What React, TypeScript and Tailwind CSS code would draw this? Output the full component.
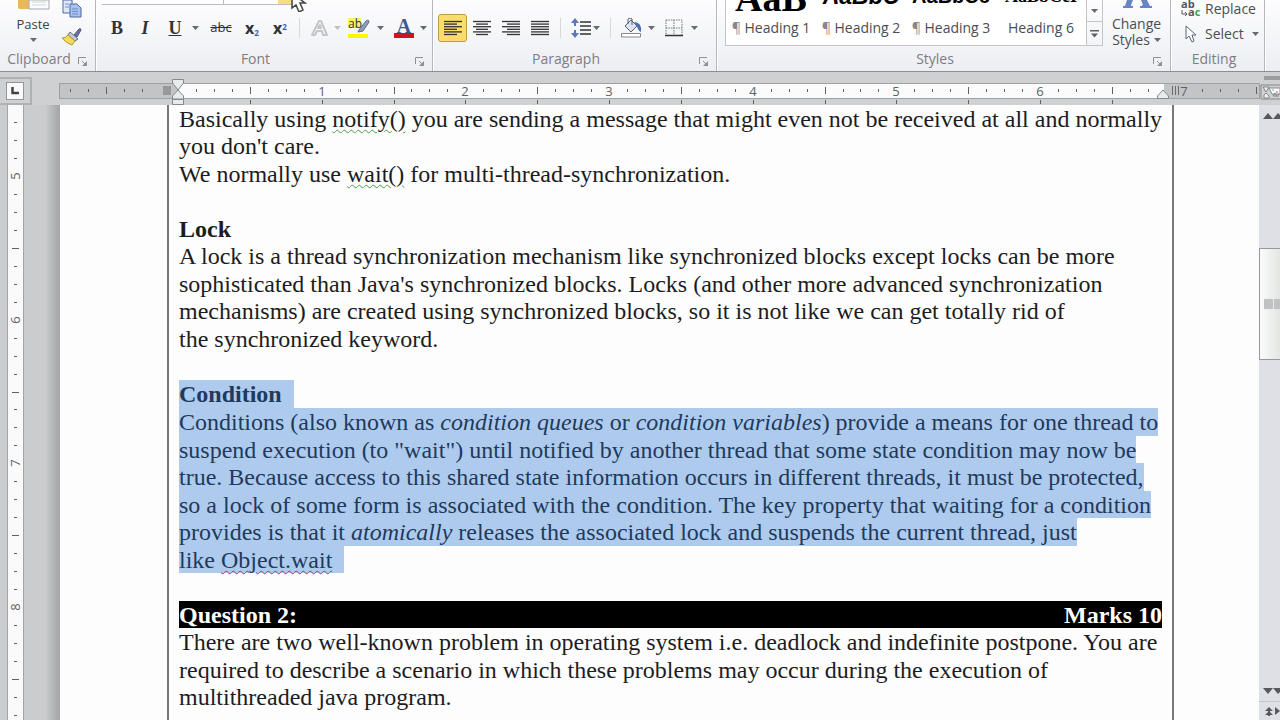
import React from "react";

// distance between eighth-inch marks on both rulers
const EIGHTH = 17.96;

const icon = "flex items-center justify-center shrink-0";

function Caret({ className = "text-[#666a70]" }: { className?: string }) {
  return (
    <svg width="7" height="4" viewBox="0 0 7 4" className={className}>
      <path d="M0 0H7L3.5 4Z" fill="currentColor" />
    </svg>
  );
}

function Launcher() {
  return (
    <button aria-label="More options" className={icon}>
      <svg width="10" height="10" viewBox="0 0 10 10" fill="none" stroke="#8d9096">
        <path d="M.5 7V.5H8M4 4L7 7" />
        <path d="M9 4V9H4Z" fill="#8d9096" stroke="none" />
      </svg>
    </button>
  );
}

function Group({
  title,
  className,
  launcher = true,
  children,
}: {
  title: string;
  className: string;
  launcher?: boolean;
  children: React.ReactNode;
}) {
  return (
    <section
      className={`flex flex-col justify-end shrink-0 border-r border-[#b4b7bc] shadow-[1px_0_0_#ffffff] ${className}`}
    >
      <div className="flex flex-col justify-end shrink-0 h-[50px]">{children}</div>
      <div className="flex items-end shrink-0 h-[21px] pr-[7px] pb-1 text-sm leading-4 text-[#7b7e84]">
        <h2 className="grow text-center">{title}</h2>
        {launcher && <Launcher />}
      </div>
    </section>
  );
}

function Lines({ rows }: { rows: number[][] }) {
  return (
    <svg width="18" height="16" viewBox="0 0 18 16" stroke="#333" strokeWidth="1.3">
      {rows.map(([x1, x2], i) => (
        <path key={i} d={`M${x1} ${1.5 + i * 2.6}H${x2}`} />
      ))}
    </svg>
  );
}

const ALIGN = [
  { name: "Align left", rows: [[0, 18], [0, 13], [0, 18], [0, 13], [0, 18], [0, 13]] },
  { name: "Center", rows: [[0, 18], [3, 15], [0, 18], [3, 15], [0, 18], [3, 15]] },
  { name: "Align right", rows: [[0, 18], [5, 18], [0, 18], [5, 18], [0, 18], [5, 18]] },
  { name: "Justify", rows: [[0, 18], [0, 18], [0, 18], [0, 18], [0, 18], [0, 18]] },
];

function ClipboardGroup() {
  return (
    <Group title="Clipboard" className="w-24">
      <div className="flex items-end h-[50px] pl-4">
        <button className="flex flex-col items-center w-[34px] text-[13px] leading-4 text-[#3f4247]">
          <svg width="34" height="10" viewBox="0 0 34 10">
            <path d="M2 0H18V9H4Q2 9 2 7Z" fill="#ecb75c" />
            <path d="M13 0H33V9H13Z" fill="#fbfcfd" stroke="#a7aab2" />
            <path d="M16 2H30M16 5H30" stroke="#d2d5db" />
          </svg>
          <span className="mt-1.5">Paste</span>
          <span className="flex h-[18px] pt-1.5">
            <Caret />
          </span>
        </button>
        <div className="flex flex-col items-center ml-3 mb-1">
          <button aria-label="Copy" className={icon}>
            <svg width="20" height="18" viewBox="0 0 20 18" stroke="#4a69a8">
              <path d="M1 0H10V13H1Z" fill="#dfe8f8" />
              <path d="M8 4H15L19 8V17H8Z" fill="#a9c2ee" />
              <path d="M10 9H16M10 11.500H16M10 14H16M3 4H7M3 7H7" stroke="#6d90cf" />
            </svg>
          </button>
          <button aria-label="Format painter" className="mt-2.5">
            <svg width="20" height="18" viewBox="0 0 20 18">
              <path d="M12 7L17 1Q19 0 19 2L15 9Z" fill="#6c70a4" stroke="#4d5180" />
              <path d="M8 4L16 11L13 13L6 7Z" fill="#c6c9d8" stroke="#686b80" />
              <path d="M6 7L13 13L10 17Q4 15 0 10Q4 10 6 7Z" fill="#f2dc58" stroke="#b09832" />
            </svg>
          </button>
        </div>
      </div>
    </Group>
  );
}

function FontGroup() {
  return (
    <Group title="Font" className="w-[337px]">
      <div className="flex ml-[6px] h-[5px] w-[190px] border-b border-[#b9bcc2]">
        <div className="w-[122px] border-r border-[#b9bcc2] bg-white" />
        <div className="grow bg-white" />
        <div className="w-[14px] bg-[#f6df7c]" />
      </div>
      <div className="flex items-center h-[45px] pl-3 text-[#303236]">
        <button className="w-[18px] text-center font-['Liberation_Serif',serif] font-bold text-lg">B</button>
        <button className="w-[18px] ml-[10px] text-center font-['Liberation_Serif',serif] italic font-bold text-lg">I</button>
        <button className="w-[18px] ml-3 text-center font-['Liberation_Serif',serif] font-bold text-lg underline">U</button>
        <button aria-label="Underline style" className="ml-2">
          <Caret />
        </button>
        <button className="w-[22px] ml-[11px] text-[13px] text-center line-through">abc</button>
        <button aria-label="Subscript" className="w-[18px] ml-[11px] font-bold text-base">
          x<sub className="text-[8px] text-[#3c62b0]">2</sub>
        </button>
        <button aria-label="Superscript" className="w-[18px] ml-[10px] font-bold text-base">
          x<sup className="text-[8px] text-[#3c62b0]">2</sup>
        </button>
        <span className="w-px h-5 ml-2.5 bg-[#d5d7dc]" />
        <button aria-label="Text effects" className="flex items-center ml-2.5 gap-1">
          <svg width="20" height="18" viewBox="0 0 20 18" fill="none" stroke="#c3c5c9" strokeLinejoin="round">
            <path d="M2 16L9 2H11L17 16H13L12 12H7L5 16ZM8 9H11L10 6Z" strokeWidth="2" />
          </svg>
          <Caret className="text-[#bfc1c5]" />
        </button>
        <button aria-label="Text highlight color" className="flex items-center ml-1.5 gap-1.5">
          <svg width="24" height="22" viewBox="0 0 24 22">
            <path d="M1 1H14V11H1Z" fill="#f4f26c" />
            <text x="1" y="11" fontSize="12" fill="#303236">ab</text>
            <path d="M12 13L19 4Q22 2 22 5L16 14L11 15Z" fill="#8f9ebb" stroke="#5c6984" />
            <path d="M1 17H21V21H1Z" fill="#fbf606" />
          </svg>
          <Caret />
        </button>
        <button aria-label="Font color" className="flex items-center ml-2.5 gap-1.5">
          <span className="flex flex-col items-center w-5">
            <span className="h-[15px] font-['Liberation_Serif',serif] font-bold text-xl leading-4 text-[#3f5790]">A</span>
            <span className="w-5 h-[5px] bg-[#d3101d]" />
          </span>
          <Caret />
        </button>
      </div>
    </Group>
  );
}

function ParagraphGroup() {
  return (
    <Group title="Paragraph" className="w-[284px]">
      <div className="flex items-center h-[45px] pl-[5px]">
        {ALIGN.map(({ name, rows }, i) => (
          <button
            key={name}
            aria-label={name}
            className={`${icon} w-[29px] h-7 rounded-[3px] ${
              i === 0 ? "border border-[#c29a3f] bg-[#fbdc6d]" : ""
            }`}
          >
            <Lines rows={rows} />
          </button>
        ))}
        <span className="w-px h-5 ml-1.5 bg-[#d5d7dc]" />
        <button aria-label="Line spacing" className="flex items-center ml-2.5 gap-0.5">
          <svg width="20" height="20" viewBox="0 0 20 20">
            <path d="M4 0L8 5H5V8H3V5H0ZM4 20L8 15H5V12H3V15H0Z" fill="#5b78bd" />
            <path d="M9 4H20M9 8H20M9 12H20M9 16H20" stroke="#333" strokeWidth="1.500" />
          </svg>
          <Caret />
        </button>
        <span className="w-px h-5 ml-2.5 bg-[#d5d7dc]" />
        <button aria-label="Shading" className="flex items-center ml-2.5 gap-1.5">
          <svg width="21" height="20" viewBox="0 0 21 20" fill="none">
            <path d="M4 8L10 2L16 8L10 14Z" fill="#dfe5f0" stroke="#59606f" />
            <path d="M7 6V1Q9 -1 11 1V7" stroke="#59606f" />
            <path d="M13 4Q21 4 20 14Q17 13 16 8Z" fill="#4a6cb3" />
            <path d="M.5 15.500H19.500V19H.5Z" fill="#fff" stroke="#888" />
          </svg>
          <Caret />
        </button>
        <button aria-label="Borders" className="flex items-center ml-2.5 gap-2">
          <svg width="18" height="18" viewBox="0 0 18 18" fill="none" stroke="#777">
            <path d="M1 1H17V16M1 1V16M9 1V16M1 9H17" strokeDasharray="1.500 1" />
            <path d="M0 16.500H18" stroke="#333" strokeWidth="1.500" />
          </svg>
          <Caret />
        </button>
      </div>
    </Group>
  );
}

function StyleTile({ name, mark, children }: { name: string; mark?: boolean; children: React.ReactNode }) {
  return (
    <button className="flex flex-col justify-end items-center w-[90px] h-[45px] pb-[9px]">
      <span className="flex items-end shrink-0 h-5 text-black">{children}</span>
      <span className="shrink-0 h-4 mt-3.5 text-sm leading-4 whitespace-nowrap text-[#4a4d52]">
        {mark && <span className="text-[#85888d]">¶ </span>}
        {name}
      </span>
    </button>
  );
}

function StylesGroup() {
  return (
    <Group title="Styles" className="w-[454px]">
      <div className="flex h-[50px] pl-2">
        <div className="flex h-[46px] border border-t-0 border-[#c3c5ca] bg-white">
          <StyleTile name="Heading 1" mark>
            <span className="font-['Liberation_Serif',serif] font-bold text-[38px] leading-4">AaB</span>
          </StyleTile>
          <StyleTile name="Heading 2" mark>
            <span className="font-['Liberation_Sans',sans-serif] font-bold italic text-[23px] leading-5">AaBbC</span>
          </StyleTile>
          <StyleTile name="Heading 3" mark>
            <span className="font-['Liberation_Sans',sans-serif] font-bold text-xl leading-5">AaBbCc</span>
          </StyleTile>
          <StyleTile name="Heading 6">
            <span className="font-['Liberation_Serif',serif] font-bold text-lg leading-5">AaBbCcI</span>
          </StyleTile>
        </div>
        <div className="flex flex-col w-4 h-[46px] border-r border-b border-[#c3c5ca]">
          <button aria-label="Scroll styles" className={`${icon} h-[22px] border-b border-[#c3c5ca]`}>
            <Caret />
          </button>
          <button aria-label="More styles" className={`${icon} grow`}>
            <svg width="9" height="8" viewBox="0 0 9 8" fill="#5c6066">
              <path d="M0 0H9V1.500H0ZM1 3.500H8L4.500 7.500Z" />
            </svg>
          </button>
        </div>
        <button className="flex flex-col items-center grow text-sm leading-4 text-[#4a4d52]">
          <svg width="30" height="8" viewBox="0 0 30 8" fill="#6784c6">
            <path d="M5 0H11L9 5H21L19 0H25L28 6H30V8H18V6H20V5H9V6H11V8H1V6H3Z" />
          </svg>
          <span className="mt-2">Change</span>
          <span className="flex items-center gap-1">
            Styles <Caret />
          </span>
        </button>
      </div>
    </Group>
  );
}

function EditingGroup() {
  return (
    <Group title="Editing" className="w-[94px]" launcher={false}>
      <div className="flex flex-col h-[50px] pl-2.5 text-sm text-[#4a4d52]">
        <button className="flex items-center h-[18px] gap-1">
          <svg width="20" height="18" viewBox="0 0 20 18" fontSize="11" fontWeight="bold">
            <text y="8" fill="#55585e">
              ab
              <tspan x="7" y="16">a</tspan>
              <tspan fill="#2fa84a">c</tspan>
            </text>
            <path d="M1 10V14H5M4 12L6 14L4 16" fill="none" stroke="#55585e" />
          </svg>
          Replace
        </button>
        <button className="flex items-center h-9 pl-1 gap-2">
          <svg width="12" height="18" viewBox="0 0 12 18">
            <path d="M1 1V14L4 11L7 17L9 16L7 10H11Z" fill="#fff" stroke="#5b6478" />
          </svg>
          Select
          <Caret />
        </button>
      </div>
    </Group>
  );
}

function Ribbon() {
  return (
    <header className="relative flex h-[72px] shrink-0 overflow-hidden border-b border-[#8b8d91] bg-linear-to-b from-[#fdfdfe] to-[#eceef2]">
      <ClipboardGroup />
      <FontGroup />
      <ParagraphGroup />
      <StylesGroup />
      <EditingGroup />
      <svg width="16" height="20" viewBox="0 0 16 20" className="absolute left-[291px] -top-2">
        <path d="M1 1V16L5 13L8 20L12 18L9 11H14Z" fill="#fff" stroke="#444" strokeWidth="1.500" />
      </svg>
    </header>
  );
}

function range(from: number, to: number) {
  const list: number[] = [];
  for (let i = from; i <= to; i++) list.push(i);
  return list;
}

function HorizontalRuler() {
  return (
    <div className="flex h-[33px] shrink-0 bg-[#cfd0d2]">
      <div className="flex items-start w-[59px] pt-[5px]">
        <button aria-label="Left tab" className={`${icon} w-8 h-7 border-2 border-l-0 border-[#b0b1b4]`}>
          <span className={`${icon} w-[18px] h-[18px] border border-[#95979b] bg-[#fafafa]`}>
            <svg width="8" height="8" viewBox="0 0 8 8" fill="none" stroke="#444" strokeWidth="2.500">
              <path d="M1.500 0V6H8" />
            </svg>
          </span>
        </button>
      </div>
      <svg height="33" className="grow" fontSize="13" fill="#5f6165">
        <rect x="0.5" y="11.500" width="1200" height="15" fill="#c3c4c6" stroke="#9fa0a4" />
        <rect x="119" y="12" width="986" height="14" fill="#fbfbfb" />
        <rect x="104" y="14" width="8" height="9" fill="#98999c" />
        {range(-6, 60).map((i) => {
          const x = Math.round(119 + i * EIGHTH);
          if (i === 0 || i === -1 || i === 55) return null;
          if (i > 0 && i % 8 === 0)
            return (
              <text key={i} x={x} y="24" textAnchor="middle">
                {i / 8}
              </text>
            );
          const half = i % 4 === 0;
          return <rect key={i} x={x} y={half ? 15 : 17} width="1" height={half ? 7 : 3} />;
        })}
        {range(1, 13).map((i) => (
          <rect key={i} x={Math.round(119 + i * 4 * EIGHTH)} y="28" width="1" height="4" />
        ))}
        <path d="M1113.500 14V23M1116.500 14V23M1119.500 14V23" stroke="#6b6d71" />
        <g fill="#e9eaeb" stroke="#85878b">
          <path d="M113.500 7.500H124.500V11L119 18L113.500 11Z" />
          <path d="M119 18L124.500 24V27H113.500V24Z" />
          <path d="M113.500 27.500H124.500V32.500H113.500Z" />
          <path d="M1104 18L1109.500 24V26.500H1098.500V24Z" />
        </g>
      </svg>
      <div className="flex flex-col items-end w-5 pt-1">
        <div className="w-4 h-1 bg-[#9b9c9f]" />
        <svg width="20" height="16" viewBox="0 0 20 16" fill="none" stroke="#85878b" className="mt-1">
          <path d="M1 1H20M1 15H20M1 1V15" />
          <path d="M3 3H9L6 8ZM6 9L9 12V14H4V11Z" fill="#eee" />
          <path d="M9 4H20V10H12Z" fill="#fff" />
          <path d="M13 12L15 9L17 12ZM17 13L19 10" />
          <path d="M13 5V7" stroke="#4dc5c9" />
          <path d="M17 7V9" stroke="#d65353" />
        </svg>
      </div>
    </div>
  );
}

function VerticalRuler() {
  return (
    <div className="w-[60px] shrink-0 pl-[7px] bg-linear-to-r from-[#cbccce] from-75% to-[#a3a4a7]">
      <svg className="w-[17px] h-full border-x border-[#a3a4a8] bg-[#fafafa]" fontSize="13" fill="#5f6165">
        {range(-3, 30).map((i) => {
          const y = Math.round(71 + i * EIGHTH);
          if (i % 8 === 0)
            return (
              <text key={i} textAnchor="middle" transform={`translate(12 ${y}) rotate(-90)`}>
                {5 + i / 8}
              </text>
            );
          const half = i % 4 === 0;
          return <rect key={i} x={half ? 4 : 6} y={y} width={half ? 7 : 3} height="1" />;
        })}
      </svg>
    </div>
  );
}

function Line({
  children,
  selected,
  className = "odd:h-[27px] even:h-7",
}: {
  children?: React.ReactNode;
  selected?: boolean;
  className?: string;
}) {
  return (
    <div className={`flex leading-7 whitespace-pre ${className}`}>
      <span className={selected ? "bg-[#aecbee] text-[#213a5c]" : ""}>{children}</span>
    </div>
  );
}

function Grammar({ children }: { children: React.ReactNode }) {
  return (
    <span className="underline decoration-wavy decoration-1 decoration-[#4aa04a] underline-offset-2">{children}</span>
  );
}

function Page() {
  return (
    <main className="grow min-w-0 pl-[107px] pr-[85px] overflow-hidden bg-[#fdfdfd]">
      <article className="h-full border-x-2 border-[#77787a] px-[10px] font-['Liberation_Serif',serif] text-2xl text-[#1c1c1e]">
        <Line>
          Basically using <Grammar>notify()</Grammar> you are sending a message that might even not be received at all and normally
        </Line>
        <Line>you don't care.</Line>
        <Line>
          We normally use <Grammar>wait()</Grammar> for multi-thread-synchronization.
        </Line>
        <Line />
        <Line>
          <b>Lock</b>
        </Line>
        <Line>A lock is a thread synchronization mechanism like synchronized blocks except locks can be more</Line>
        <Line>sophisticated than Java's synchronized blocks. Locks (and other more advanced synchronization</Line>
        <Line>mechanisms) are created using synchronized blocks, so it is not like we can get totally rid of</Line>
        <Line>the synchronized keyword.</Line>
        <Line />
        <Line selected className="h-7">
          <b>Condition</b>
          {"  "}
        </Line>
        <Line selected>
          Conditions (also known as <i>condition queues</i> or <i>condition variables</i>) provide a means for one thread to
        </Line>
        <Line selected>suspend execution (to "wait") until notified by another thread that some state condition may now be</Line>
        <Line selected>true. Because access to this shared state information occurs in different threads, it must be protected,</Line>
        <Line selected>so a lock of some form is associated with the condition. The key property that waiting for a condition</Line>
        <Line selected>
          provides is that it <i>atomically</i> releases the associated lock and suspends the current thread, just
        </Line>
        <Line selected>
          like{" "}
          <span className="underline decoration-wavy decoration-1 decoration-[#b0306a] underline-offset-2">Object.wait</span>
          {"  "}
        </Line>
        <Line />
        <div className="flex justify-between h-[27px] leading-7 bg-black font-bold text-white">
          <h3>Question 2:</h3>
          <span>Marks 10</span>
        </div>
        <Line>There are two well-known problem in operating system i.e. deadlock and indefinite postpone. You are</Line>
        <Line>required to describe a scenario in which these problems may occur during the execution of</Line>
        <Line>multithreaded java program.</Line>
      </article>
    </main>
  );
}

function Scrollbar() {
  return (
    <aside className="flex flex-col items-end w-[21px] shrink-0 bg-[#dfe0e6] text-[#55585d]">
      <button aria-label="Scroll up" className={`${icon} h-[22px]`}>
        <svg width="17" height="6" viewBox="0 0 17 6" fill="currentColor">
          <path d="M0 6L5 0L10 6ZM10 6L15 0L17 2V6Z" />
        </svg>
      </button>
      <div className="flex items-center justify-end w-full h-28 mt-[121px] gap-px border border-r-0 border-[#96989c] bg-linear-to-r from-[#fbfbfc] to-[#e2e6e2]">
        <span className="w-[9px] h-2.5 bg-[#c0c1c3]" />
        <span className="w-[6px] h-2.5 bg-[#c0c1c3]" />
      </div>
      <div className="grow" />
      <button aria-label="Scroll down" className={`${icon} h-5`}>
        <svg width="17" height="6" viewBox="0 0 17 6" fill="currentColor">
          <path d="M0 0H10L5 6ZM10 0H17V4L15 6Z" />
        </svg>
      </button>
      <button aria-label="Previous page" className={`${icon} h-[19px] w-full justify-end border-t border-[#c6c7cc]`}>
        <svg width="15" height="9" viewBox="0 0 15 9" fill="currentColor">
          <path d="M0 4L4 0L8 4H5V5L8 8H5V9H3V8H0L3 5V4ZM10 0L15 4L10 8Z" />
        </svg>
      </button>
    </aside>
  );
}

export default function App() {
  return (
    <div className="flex flex-col h-screen overflow-hidden font-['Open_Sans','Noto_Sans',sans-serif]">
      <Ribbon />
      <HorizontalRuler />
      <div className="flex grow min-h-0">
        <VerticalRuler />
        <Page />
        <Scrollbar />
      </div>
    </div>
  );
}
